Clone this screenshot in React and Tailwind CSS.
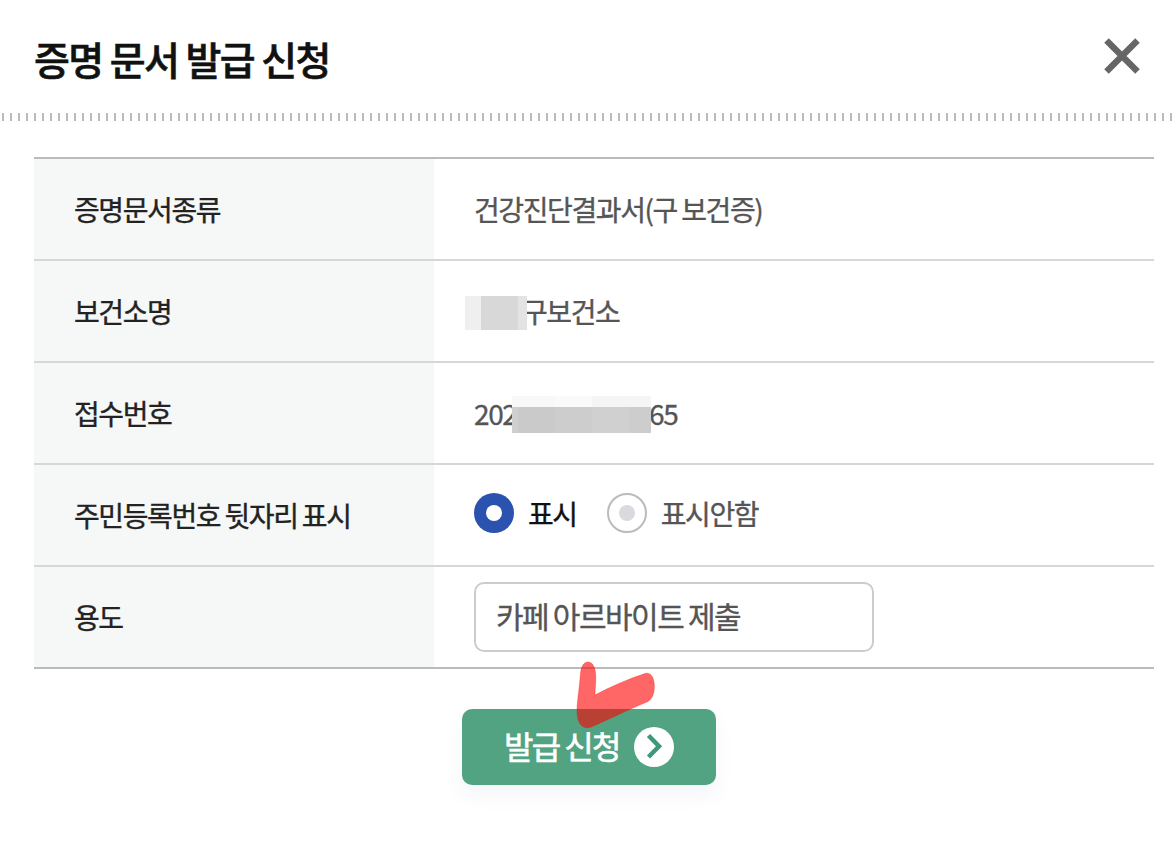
import React, { useState } from 'react';

const Row = ({ label, last, children }) => (
  <div className={`flex h-[102px] border-b-2 ${last ? 'border-[#bbbbbb]' : 'border-[#d7d7d7]'}`}>
    <div className="w-[400px] shrink-0 bg-[#f6f8f7] pl-10 flex items-center text-[#222222]">
      <span className="leading-10">{label}</span>
    </div>
    <div className="flex-1 pl-10 flex items-center text-[#555555]">{children}</div>
  </div>
);

const Radio = ({ label, checked, onChange }) => (
  <button type="button" role="radio" aria-checked={checked} onClick={onChange} className="flex items-center gap-[14px]">
    <span
      className={`w-10 h-10 rounded-full flex items-center justify-center ${
        checked ? 'bg-[#2a52ae]' : 'bg-white border-2 border-[#bbbbbb]'
      }`}
    >
      <span className={checked ? 'w-4 h-4 rounded-full bg-white' : 'w-4 h-4 rounded-full bg-[#d8dade]'} />
    </span>
    <span className={checked ? 'text-[#111111]' : 'text-[#555555]'}>{label}</span>
  </button>
);

const App = () => {
  const [showId, setShowId] = useState(true);
  const [purpose, setPurpose] = useState('카페 아르바이트 제출');

  return (
    <div className="w-[1172px] h-[844px] overflow-hidden bg-white font-['Noto_Sans_CJK_KR','Noto_Sans',sans-serif] text-[28px] tracking-[-0.05em] [word-spacing:-0.6px] [-webkit-text-stroke:0.35px]">
      {/* Header */}
      <div className="h-[113px] pl-[34px] pr-8 flex items-center justify-between">
        <h1 className="text-[39px] leading-[60px] font-medium tracking-[-1.6px] [word-spacing:0px] text-[#111111] mt-0.5 [-webkit-text-stroke:0.6px]">
          증명 문서 발급 신청
        </h1>
        <button type="button" aria-label="닫기" className="-mt-0.5">
          <svg width="36" height="36" viewBox="0 0 36 36" fill="none" stroke="#666666" strokeWidth="6.4">
            <path d="M2.500 2.500 33.500 33.500M33.500 2.500 2.500 33.500" />
          </svg>
        </button>
      </div>
      <div className="h-2 bg-[repeating-linear-gradient(90deg,transparent_0px,transparent_2px,#bbbbbb_2px,#bbbbbb_4px,transparent_4px,transparent_8px)]" />

      {/* Request details */}
      <div className="ml-[34px] mr-[18px] mt-9 border-t-2 border-[#bbbbbb]">
        <Row label="증명문서종류">건강진단결과서(구 보건증)</Row>
        <Row label="보건소명">
          <div className="relative pl-[48px]">
            구보건소
            <div className="absolute -left-[9px] top-[6px] w-[62px] h-[34px] flex">
              <span className="w-4 bg-[#efefef]" />
              <span className="w-[37px] bg-[#d8d8d8]" />
              <span className="w-[9px] bg-[#e3e3e3]" />
            </div>
          </div>
        </Row>
        <Row label="접수번호">
          <div className="relative flex">
            <span className="w-[175px]">202</span>
            <span>65</span>
            <div className="absolute left-[38px] top-[4px] w-[139px] h-[37px] flex flex-col">
              <div className="h-[11px] flex">
                <span className="w-[43px] bg-[#f8f8f8]" />
                <span className="w-[37px] bg-[#fafafa]" />
                <span className="flex-1 bg-[#f5f5f5]" />
              </div>
              <div className="flex-1 flex">
                <span className="w-[6px] bg-[#cfcfcf]" />
                <span className="w-[37px] bg-[#cacaca]" />
                <span className="w-[37px] bg-[#cdcdcd]" />
                <span className="w-[37px] bg-[#d0d0d0]" />
                <span className="flex-1 bg-[#cdcdcd]" />
              </div>
            </div>
          </div>
        </Row>
        <Row label="주민등록번호 뒷자리 표시">
          <div role="radiogroup" className="flex gap-[30px] mb-1">
            <Radio label="표시" checked={showId} onChange={() => setShowId(true)} />
            <Radio label="표시안함" checked={!showId} onChange={() => setShowId(false)} />
          </div>
        </Row>
        <Row label="용도" last>
          <input
            type="text"
            value={purpose}
            onChange={(e) => setPurpose(e.target.value)}
            className="w-[400px] h-[70px] rounded-[10px] border-2 border-[#cccccc] bg-white px-5 pb-[5px] text-[30px] tracking-[-0.05em] [word-spacing:-0.6px] text-[#555555]"
          />
        </Row>
      </div>

      {/* Submit */}
      <div className="relative w-[254px] ml-[462px] mt-10">
        <button
          type="button"
          className="w-full h-[76px] rounded-[10px] bg-[#52a382] text-white text-[32px] tracking-[-0.05em] [word-spacing:-1px] flex items-center pl-[42px] shadow-[0_10px_20px_rgba(50,90,140,0.06)] [-webkit-text-stroke:0.6px]"
        >
          <span className="w-[130px] text-left pb-[5px]">발급 신청</span>
          <svg width="40" height="40" viewBox="0 0 40 40" fill="none">
            <circle cx="20" cy="20" r="20" fill="#fff" />
            <path d="M14.500 8.500 25 19.300 14.500 30" stroke="#3f987b" strokeWidth="4.500" />
          </svg>
        </button>
        <svg className="absolute left-[98px] -top-[58px]" width="120" height="90" viewBox="0 0 120 90">
          <path
            d="M20.500 23C21 15 24 11 28 11C32.500 11 35.500 16 35.700 25C36 32 35 37 35 44C51 35.500 68 28 85 22.500C90 21 93 25 94 31C95 38 94 48 87 51C67 59 48 69 31 76C25 78.500 19 75 17.500 66C16 57 18.500 44 19.300 35Z"
            fill="#ff0000"
            fillOpacity="0.6"
            stroke="#ff0000"
            strokeOpacity="0.45"
            strokeWidth="0.7"
          />
        </svg>
      </div>
    </div>
  );
};

export default App;
